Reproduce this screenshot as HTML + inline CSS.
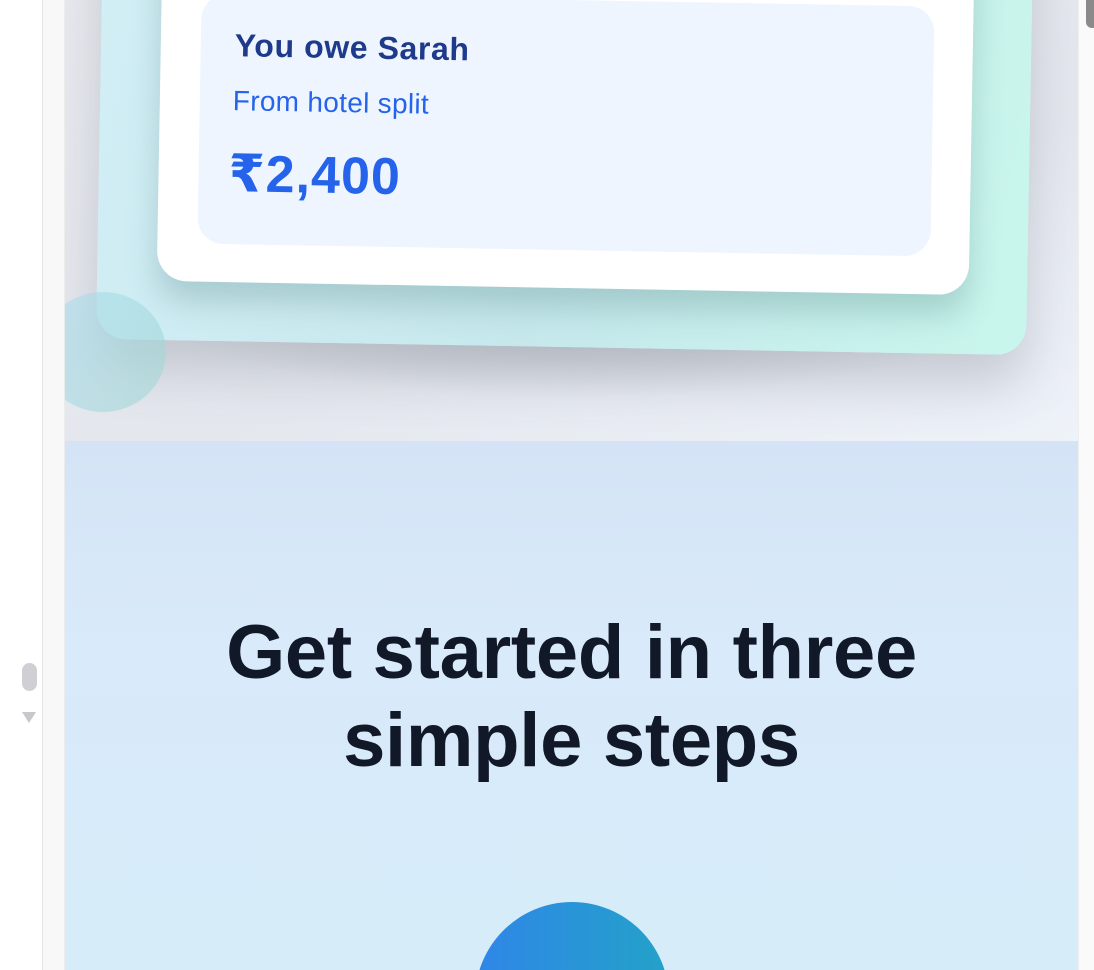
<!DOCTYPE html>
<html><head><meta charset="utf-8"><style>
*{margin:0;padding:0;box-sizing:border-box}
html,body{width:1094px;height:970px;overflow:hidden}
body{background:#fff;font-family:"Liberation Sans","DejaVu Sans",sans-serif;position:relative}
.lstrip{position:absolute;left:42px;top:0;width:23px;height:970px;background:#f8f8f8;border-left:1px solid #e6e6e6;border-right:1px solid #ececec}
.rstrip{position:absolute;left:1078px;top:0;width:16px;height:970px;background:#fafafa;border-left:1px solid #eee}
.thumbr{position:absolute;left:1086px;top:-10px;width:8px;height:38px;border-radius:6px 0 0 6px;background:#8a8a8a}
.thumb{position:absolute;left:22px;top:663px;width:15px;height:28px;border-radius:8px;background:#d0d0d4}
.arrow{position:absolute;left:22px;top:712px;width:0;height:0;border-left:7px solid transparent;border-right:7px solid transparent;border-top:11px solid #c8c8cc}
.hero{position:absolute;left:65px;top:0;width:1013px;height:441px;background:linear-gradient(160deg,#e8eaef 0%,#e4e7ee 60%,#eef2f9 100%);overflow:hidden}
.shadow{position:absolute;left:60px;top:250px;width:900px;height:150px;background:radial-gradient(ellipse at 50% 30%,rgba(120,125,135,.35),rgba(120,125,135,0) 70%)}
.teal{position:absolute;left:35px;top:-120px;width:930px;height:467px;border-radius:30px;background:linear-gradient(100deg,#d2eef6 0%,#c6e8ec 50%,#c8f6ec 100%);transform:rotate(1deg);box-shadow:0 30px 50px rgba(90,100,110,.25)}
.card{position:absolute;left:95px;top:-100px;width:812px;height:388px;border-radius:30px;background:#fff;transform:rotate(1deg);box-shadow:0 20px 30px rgba(60,110,110,.25)}
.inner{position:absolute;left:40px;top:100px;width:733px;height:250px;border-radius:26px;background:#eef5ff}
.t1{position:absolute;left:34px;top:33px;font-size:32px;letter-spacing:.6px;font-weight:bold;color:#1e3a8a}
.t2{position:absolute;left:33px;top:91px;font-size:28px;letter-spacing:.3px;color:#2563eb}
.t3{position:absolute;left:30px;top:150px;font-size:52px;letter-spacing:1px;font-weight:bold;color:#2563eb}
.circ{position:absolute;left:-25px;top:292px;width:126px;height:120px;border-radius:50%;background:linear-gradient(120deg,rgba(170,220,240,.6),rgba(160,215,210,.6))}
.sec{position:absolute;left:65px;top:441px;width:1013px;height:529px;background:linear-gradient(180deg,#d4e4f6 0%,#d9eafa 40%,#d6ecf9 100%);overflow:hidden}
h1{position:absolute;left:0;width:1013px;top:168px;text-align:center;font-size:76px;letter-spacing:-0.3px;line-height:88px;font-weight:bold;color:#111827}
.ball{position:absolute;left:410px;top:461px;width:194px;height:194px;border-radius:50%;background:linear-gradient(90deg,#2f86e8,#23a2c8)}
</style></head><body>
<div class="lstrip"></div>
<div class="thumb"></div><div class="arrow"></div>
<div class="hero">
 <div class="shadow"></div>
 <div class="teal"></div>
 <div class="card"><div class="inner"><div class="t1">You owe Sarah</div><div class="t2">From hotel split</div><div class="t3">₹2,400</div></div></div>
 <div class="circ"></div>
</div>
<div class="sec"><h1>Get started in three<br>simple steps</h1><div class="ball"></div></div>
<div class="rstrip"></div><div class="thumbr"></div>
</body></html>
